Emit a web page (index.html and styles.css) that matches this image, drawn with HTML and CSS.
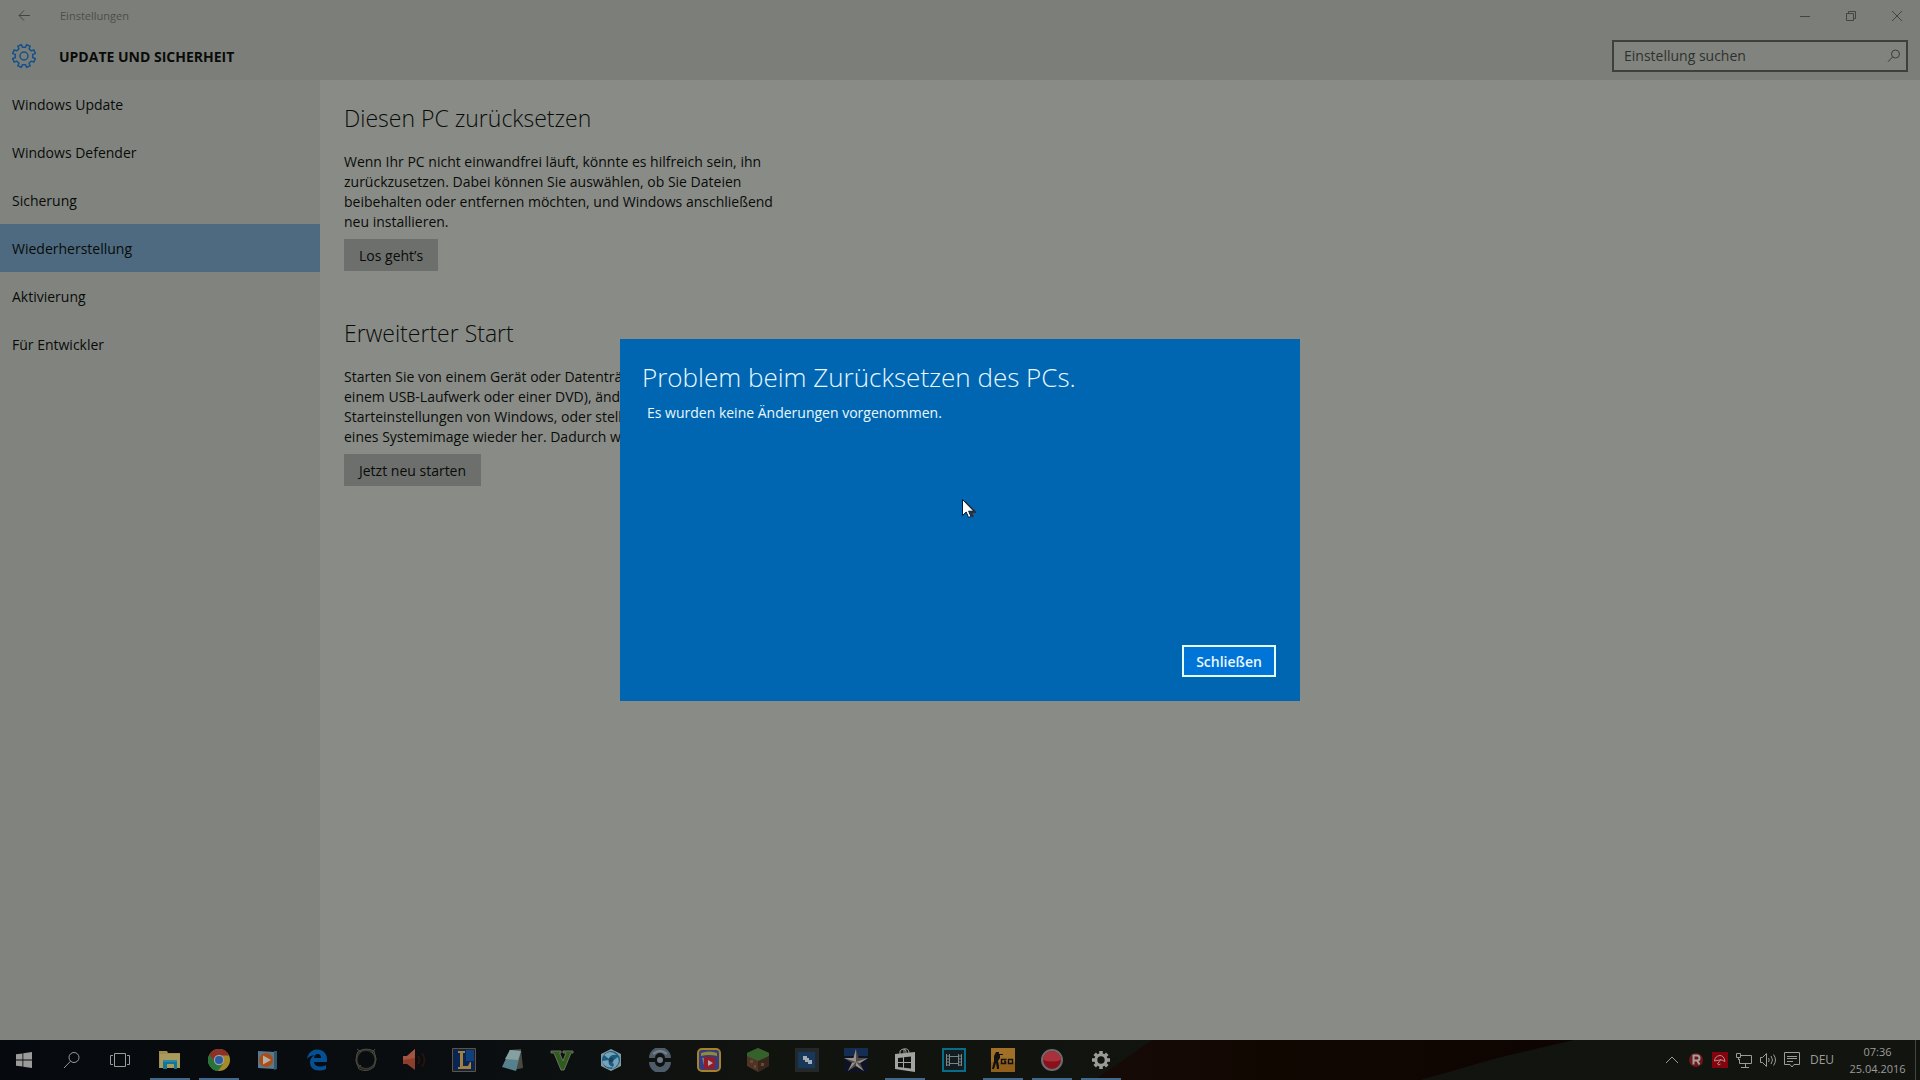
FILE: index.html
```html
<!DOCTYPE html>
<html lang="de">
<head>
<meta charset="utf-8">
<title>Einstellungen</title>
<link rel="stylesheet" href="styles.css">
</head>
<body>
<div class="window">
  <header class="top">
    <div class="titlebar">
      <button class="icon-btn" aria-label="Zurück"><svg width="16" height="16" viewBox="0 0 16 16"><path d="M14 7.500H3M8 2.500l-5 5 5 5"/></svg></button>
      <span class="app-name">Einstellungen</span>
      <button class="icon-btn" aria-label="Minimieren"><svg width="12" height="12" viewBox="0 0 12 12"><path d="M1 6.500h10"/></svg></button>
      <button class="icon-btn" aria-label="Verkleinern"><svg width="12" height="12" viewBox="0 0 12 12"><path d="M1.500 3.500h7v7h-7zM3.500 3.500v-2h7v7h-2"/></svg></button>
      <button class="icon-btn" aria-label="Schließen"><svg width="12" height="12" viewBox="0 0 12 12"><path d="M1 1l10 10M11 1L1 11"/></svg></button>
    </div>
    <div class="heading">
      <svg class="gear" width="26" height="26" viewBox="-13 -13 26 26"><path d="M1.500-8.700L2.600-11.300 6.100-9.800 5.100-7.200Q6.300-6.300 7.200-5.100L9.800-6.100 11.300-2.600 8.700-1.500Q9 0 8.700 1.500L11.300 2.600 9.800 6.100 7.200 5.100Q6.300 6.300 5.100 7.200L6.100 9.800 2.600 11.300 1.500 8.700Q0 9-1.500 8.700L-2.600 11.300-6.100 9.800-5.100 7.200Q-6.300 6.300-7.200 5.100L-9.800 6.100-11.300 2.600-8.700 1.500Q-9 0-8.700-1.500L-11.300-2.600-9.800-6.100-7.200-5.100Q-6.300-6.300-5.100-7.200L-6.100-9.800-2.600-11.300-1.500-8.700Q0-9 1.500-8.700z"/><circle r="4"/></svg>
      <h1>UPDATE UND SICHERHEIT</h1>
      <label class="search">
        <input type="text" placeholder="Einstellung suchen" aria-label="Einstellung suchen">
        <svg width="14" height="14" viewBox="0 0 14 14"><circle cx="8.500" cy="5" r="4"/><path d="M5.700 7.800L1 12.800"/></svg>
      </label>
    </div>
  </header>
  <div class="body">
    <nav class="side">
      <a href="#">Windows Update</a>
      <a href="#">Windows Defender</a>
      <a href="#">Sicherung</a>
      <a href="#" class="current" aria-current="page">Wiederherstellung</a>
      <a href="#">Aktivierung</a>
      <a href="#">Für Entwickler</a>
    </nav>
    <main class="content">
      <section>
        <h2>Diesen PC zurücksetzen</h2>
        <p>Wenn Ihr PC nicht einwandfrei läuft, könnte es hilfreich sein, ihn<br>zurückzusetzen. Dabei können Sie auswählen, ob Sie Dateien<br>beibehalten oder entfernen möchten, und Windows anschließend<br>neu installieren.</p>
        <button class="action">Los geht’s</button>
      </section>
      <section>
        <h2>Erweiterter Start</h2>
        <p class="clipped">Starten Sie von einem Gerät oder Datenträger<br>einem USB-Laufwerk oder einer DVD), ändern<br>Starteinstellungen von Windows, oder stellen<br>eines Systemimage wieder her. Dadurch wird</p>
        <button class="action">Jetzt neu starten</button>
      </section>
    </main>
  </div>
  <div class="overlay">
    <div class="dialog" role="dialog" aria-labelledby="dialog-title">
      <h2 id="dialog-title">Problem beim Zurücksetzen des PCs.</h2>
      <p>Es wurden keine Änderungen vorgenommen.</p>
      <button class="close">Schließen</button>
    </div>
    <svg class="cursor" width="14" height="20" viewBox="0 0 14 20"><path d="M2.500 2.500L13 13H8.800L11 18" stroke="#35302f" stroke-width="2" fill="none"/><path d="M.5.500V16.500L4.200 13 6.600 18.500 9 17.500 6.600 12.200H11.800z" fill="#fff" stroke="#001a3a"/></svg>
  </div>
</div>
<footer class="taskbar">
  <div class="system">
    <button aria-label="Start"><svg width="16" height="16" viewBox="0 0 16 16" fill="#9b9c99"><path d="M0 2.300L6.500 1.400V7.500H0zM7.300 1.300L16 0v7.500H7.300zM0 8.400h6.500v6.200L0 13.700zM7.300 8.400H16V16l-8.700-1.200z"/></svg></button>
    <button aria-label="Suchen"><svg class="line" width="18" height="18" viewBox="0 0 18 18"><circle cx="11" cy="6.500" r="5"/><path d="M7.500 10.200L1 17"/></svg></button>
    <button aria-label="Aktive Anwendungen"><svg class="line" width="20" height="16" viewBox="0 0 20 16"><path d="M4.500 1.500h11v13h-11zM3 3.500H.500v9H3M17 3.500h2.500v9H17"/></svg></button>
  </div>
  <div class="apps">
    <button class="open" aria-label="Explorer"><svg width="24" height="24" viewBox="0 0 24 24"><path d="M1 3h8l1 2h12v15H1z" fill="#a38d4c"/><path d="M2 6h20v14H2z" fill="#a99a5d"/><path d="M5 12h14v9h-3v-5H9v5H5z" fill="#12759a"/><path d="M5 12h14v2H5z" fill="#2b88a4"/></svg></button>
    <button class="open" aria-label="Chrome"><svg width="24" height="24" viewBox="0 0 24 24"><circle cx="12" cy="12" r="11" fill="#a58a28"/><path d="M11 23L2 7l5 1 5 6 4 2z" fill="#27733c"/><path d="M2.500 6.400A11 11 0 0 0 11 23L7 13z" fill="#27733c"/><path d="M2.500 6.400A11 11 0 0 1 22 7.500H12L7 13z" fill="#8c3028"/><circle cx="12" cy="12" r="5.200" fill="#a0a3a0"/><circle cx="12" cy="12" r="4" fill="#2c5ba5"/></svg></button>
    <button aria-label="Media Player"><svg width="24" height="24" viewBox="0 0 24 24"><path d="M2 3l17 1v17L2 20z" fill="#577a90"/><path d="M18 3h3v18l-3 1z" fill="#34566b"/><circle cx="10" cy="12" r="7" fill="#aa4e18"/><path d="M7 7.500l8 4.500-8 4.500z" fill="#b5b1a8"/></svg></button>
    <button aria-label="Edge"><svg width="24" height="24" viewBox="0 0 24 24"><path d="M2 11C3 4 8 1.500 12 1.500c6 0 10 4 10 9.500v3H9c.2 3 3 4.500 6 4.500 2.300 0 4.300-.6 6-1.600V21c-2 1.100-4.500 1.600-7 1.600-5.500 0-9-3.400-9-8 0-3.300 1.600-6 4.500-7.400C6.500 7.500 3.500 8.500 2 11zm7-1h7c0-2.500-1.200-4-3.400-4C10.500 6 9.300 7.800 9 10z" fill="#054f93"/></svg></button>
    <button aria-label="Ring"><svg width="24" height="24" viewBox="0 0 24 24" fill="none" stroke="#34352f"><circle cx="12" cy="11.500" r="9.500" stroke-width="2"/><path d="M4 3.500Q12-1 20 3l2 8-2 8q-7 6-15 2L2 13 3 6zM3 1l4 3M21 1l-3 4M4 20l3-3" stroke="#4d4b42"/></svg></button>
    <button aria-label="Lautsprecher"><svg width="24" height="24" viewBox="0 0 24 24"><path d="M0 8h4l8-7v21l-8-6H0z" fill="#8c3e2b"/><path d="M0 8h4l8-7v9L0 12z" fill="#a15540"/><path d="M15 8q3 4 0 8M19 5q5 7 0 14" stroke="#28120d" stroke-width="2" fill="none"/></svg></button>
    <button aria-label="League of Legends"><svg width="24" height="24" viewBox="0 0 24 24"><path d="M.5.500h23v23H.5z" fill="#092555" stroke="#67532c"/><path d="M14 2h8v11h-8z" fill="#103f7c"/><path d="M6 3h7v2h-2v13h5l2-4h1v7H6v-2h2V5H6z" fill="#a3803c"/></svg></button>
    <button aria-label="Editor"><svg width="24" height="24" viewBox="0 0 24 24"><path d="M8 2l12-1 2 19-10 2z" fill="#4b4a40"/><path d="M9 2l11 1-5 20-14-4z" fill="#55808c"/><path d="M9 2l11 1-3 9-13-1z" fill="#86a0a2"/></svg></button>
    <button aria-label="GTA V"><svg width="24" height="24" viewBox="0 0 24 24"><path d="M1 3h10v2H9.500l3.500 8 3-8h-3V3h10v2h-2l-7 17h-3L4 5H1z" fill="#2f5c1d" stroke="#6b7063"/></svg></button>
    <button aria-label="Sechseck"><svg width="24" height="24" viewBox="0 0 24 24"><path d="M12 1l10 5v12l-10 5-10-5V6z" fill="#8198a2"/><circle cx="12" cy="12" r="9" fill="#195c83"/><path d="M5 7q6-6 13 0-7-1-8 4M19 9q3 8-6 12 4-6-1-7M3 13q3 8 11 6-6-2-4-7" fill="#77a3b5"/><circle cx="12" cy="12" r="2.500" fill="#194361"/></svg></button>
    <button aria-label="Pokéball"><svg width="24" height="24" viewBox="0 0 24 24"><path d="M1 10a11 11 0 0 1 22 0h-6a5 5 0 0 0-10 0zM1 14h6a5 5 0 0 0 10 0h6a11 11 0 0 1-22 0z" fill="#4e5b68"/><path d="M5 6q7-6 14 0" stroke="#77828a" stroke-width="2" fill="none"/><circle cx="12" cy="12" r="3" fill="#6c7883"/></svg></button>
    <button aria-label="Pokémon TCG"><svg width="24" height="24" viewBox="0 0 24 24"><rect x="1" y="1" width="22" height="22" rx="4" fill="#343c82" stroke="#a58226" stroke-width="2"/><path d="M4 5q8-3 16 0v3q-8-2-16 0z" fill="#8f8a39"/><path d="M5 10l9-1 3 11-9 1z" fill="#7d7888"/><path d="M7 9h11v12H7z" fill="#921c28"/><path d="M11 12l5 3-5 3z" fill="#b5aaa8"/></svg></button>
    <button aria-label="Minecraft"><svg width="24" height="24" viewBox="0 0 24 24"><path d="M12 0l11 5v13l-11 6-11-6V5z" fill="#4e3425"/><path d="M12 11l11-6v13l-11 6z" fill="#38261d"/><path d="M12 0l11 5v3l-11 5L1 8V5z" fill="#35622a"/><path d="M4 12h3v3H4zm4 5h2v3H8zm7-2h3v3h-3z" fill="#6a4a35"/></svg></button>
    <button aria-label="Kacheln"><svg width="24" height="24" viewBox="0 0 24 24"><path d="M0 0h24v24H0z" fill="#23292b"/><path d="M3 4h17v16H3z" fill="#17385a"/><path d="M8 8h4v4H8zm2 2h4v4h-4zm3 2h4v4h-4z" fill="#a6adb2"/></svg></button>
    <button aria-label="Stern"><svg width="24" height="24" viewBox="0 0 24 24"><path d="M0 0h24v24H0z" fill="#0d1322"/><path d="M0 0h24v8H0z" fill="#152d52"/><path d="M12 1l2.500 9H24l-8 5 4 8-8-5-8 5 4-8-8-5h9.500z" fill="#4e4a49"/><path d="M12 1v13l-2.500-4zM24 10l-12 4 4 1zM20 23l-8-9v4zM4 23l8-9-4 1zM0 10l12 4-2.500-4z" fill="#9a928c"/></svg></button>
    <button class="open" aria-label="Store"><svg width="24" height="24" viewBox="0 0 24 24"><path d="M2 6l20-2v20L2 21z" fill="#a3a4a1"/><path d="M7 6V3q4-4 6 0v2M11 5V1q5-1 5 4" fill="none" stroke="#a3a4a1"/><path d="M5 10l5-.6V14H5zM11 9.300L18 8.500V14h-7zM5 15h5v4.500L5 19zM11 15h7v5.500l-7-.8z" fill="#11130f"/></svg></button>
    <button aria-label="Movie Maker"><svg width="24" height="24" viewBox="0 0 24 24"><path d="M1 1h22v22H1z" fill="#121c21" stroke="#086d86" stroke-width="2"/><path d="M4.500 6v12M7.500 6v12M16.500 6v12M19.500 6v12M7.500 8.500h9M7.500 15.500h9M4 8h3M4 11h3M4 14h3M4 17h3M17 8h3M17 11h3M17 14h3M17 17h3" stroke="#7b8588" fill="none"/></svg></button>
    <button class="open" aria-label="Counter-Strike"><svg width="24" height="24" viewBox="0 0 24 24"><path d="M0 0h24v24H0z" fill="#a17026"/><path d="M0 14h24v10H0z" fill="#925e1b"/><path d="M5 4h3v2h4v1H9v3l-2 3 1 5v3H6l-1-6-2 6H1l2-8V8z" fill="#111"/><path d="M15.500 11.500h-5v4h4v-2H13M17.500 11.500h4v4h-4z" fill="none" stroke="#111" stroke-width="1.500"/></svg></button>
    <button class="open" aria-label="Aufnahme"><svg width="24" height="24" viewBox="0 0 24 24"><circle cx="12" cy="12" r="10" fill="#8a101b" stroke="#6c6c70" stroke-width="2"/><path d="M3 12a9 9 0 0 1 18 0q-9 3-18 0z" fill="#a9313b"/></svg></button>
    <button class="open" aria-label="Einstellungen"><svg width="20" height="20" viewBox="-10 -10 20 20" fill="none" stroke="#9c9b97"><circle r="5.200" stroke-width="3"/><path d="M0-9v3M0 9V6M-9 0h3M9 0H6M-6.300-6.300l2 2M6.300-6.300l-2 2M-6.300 6.300l2-2M6.300 6.300l-2-2" stroke-width="3.500"/></svg></button>
  </div>
  <div class="tray">
    <button aria-label="Ausgeblendete Symbole"><svg class="line" width="14" height="16" viewBox="0 0 14 16"><path d="M1 11l6-6 6 6"/></svg></button>
    <button aria-label="Recorder"><svg width="16" height="16" viewBox="0 0 16 16"><circle cx="8" cy="8" r="7" fill="#6d171b"/><path d="M5.500 12.500v-9H9a2.500 2.500 0 0 1 0 5H6M9 8.500l2.500 4" fill="none" stroke="#a2a09d" stroke-width="2"/></svg></button>
    <button aria-label="Virenschutz"><svg width="16" height="16" viewBox="0 0 16 16"><path d="M0 0h16v16H0z" fill="#84030d"/><path d="M2.500 9Q3 4 8 3.500q4 0 5 6-3-2-5.500-1.500T2.500 9zM9 7L5.500 12q1.500 2 3 0" fill="none" stroke="#a99291"/></svg></button>
    <button aria-label="Netzwerk"><svg class="line" width="16" height="16" viewBox="0 0 16 16"><path d="M5 3.500h10.500v8H3.500V7M9.500 12v3M5 15.500h8M.5 1.500h4v4h-4zM2.500 6v2"/></svg></button>
    <button aria-label="Lautstärke"><svg class="line" width="16" height="16" viewBox="0 0 16 16"><path d="M.5 5.500h2l4-4v13l-4-4h-2zM8.500 6q1.500 2 0 4M11 4q3 4 0 8M13.500 2.500q4 5.500 0 11"/></svg></button>
    <button aria-label="Info-Center"><svg class="line" width="16" height="16" viewBox="0 0 16 16"><path d="M.5.500h15v12H10l-2 2.500-2-2.500H.5zM3 4.500h10M3 6.500h10M3 9.500h6"/></svg></button>
    <button class="lang">DEU</button>
    <button class="clock"><span>07:36</span><span>25.04.2016</span></button>
    <i class="peek"></i>
  </div>
</footer>
</body>
</html>
```
FILE: styles.css
```css
* {
  box-sizing: border-box;
}

body {
  margin: 0;
  min-height: 100vh;
  display: flex;
  flex-direction: column;
  font: 14px/20px "Open Sans", "Noto Sans", sans-serif;
  color: #090b09;
  background: #898b87;
}

h1, h2, p {
  margin: 0;
  font-weight: 400;
}

button {
  margin: 0;
  padding: 0;
  border: 0;
  background: none;
  font: inherit;
  color: inherit;
}

svg {
  display: block;
}

.window {
  position: relative;
  flex: 1;
  display: flex;
  flex-direction: column;
}

.top {
  height: 80px;
  background: #7c7e7a;
}

.titlebar {
  height: 32px;
  display: flex;
  align-items: center;
  color: #4c4e4b;
  font-size: 11px;
}

.icon-btn {
  width: 46px;
  height: 32px;
  display: grid;
  place-items: center;
  fill: none;
  stroke: #434542;
}

.icon-btn:first-child {
  width: 48px;
}

.app-name {
  flex: 1;
  padding-left: 12px;
}

.heading {
  height: 48px;
  padding: 0 12px 0 11px;
  display: flex;
  align-items: center;
}

.gear {
  fill: none;
  stroke: #16518a;
  stroke-width: 1.5;
}

h1 {
  flex: 1;
  padding: 2px 0 0 22px;
  font-size: 14px;
  font-weight: 700;
}

.search {
  width: 296px;
  height: 32px;
  padding: 0 5px 0 10px;
  display: flex;
  align-items: center;
  border: 2px solid #3e403d;
  background: #81837f;
}

.search input {
  flex: 1;
  min-width: 0;
  padding: 0;
  border: 0;
  outline: 0;
  background: none;
  font: inherit;
}

.search input::placeholder {
  color: #2f312e;
  opacity: 1;
}

.search svg {
  fill: none;
  stroke: #3c3e3b;
}

.body {
  flex: 1;
  display: flex;
}

.side {
  width: 320px;
  background: #81837f;
}

.side a {
  display: block;
  height: 48px;
  padding: 15px 12px 0;
  color: inherit;
  text-decoration: none;
}

.side .current {
  background: #4d6a80;
}

.content {
  flex: 1;
  padding: 22px 24px;
}

.content section {
  margin-bottom: 46px;
}

.content h2 {
  margin-bottom: 18px;
  font-size: 23px;
  line-height: 32px;
  font-weight: 300;
}

.content p {
  margin-bottom: 7px;
}

.clipped {
  width: 300px;
  overflow: hidden;
  white-space: nowrap;
}

.action {
  height: 32px;
  padding: 2px 15px 0;
  background: #6d6f6c;
}

.overlay {
  position: absolute;
  inset: 0;
  display: grid;
  place-items: center;
}

.dialog {
  width: 680px;
  height: 362px;
  padding: 20px 24px 24px;
  display: flex;
  flex-direction: column;
  background: #0066b1;
  color: #e8f8ff;
}

.dialog h2 {
  margin-left: -2px;
  font-size: 26px;
  line-height: 36px;
  font-weight: 300;
}

.dialog p {
  flex: 1;
  padding: 8px 3px;
}

.close {
  align-self: flex-end;
  width: 94px;
  height: 32px;
  padding-top: 2px;
  border: 2px solid #e4ffff;
  background: #0074d7;
  font-weight: 600;
}

.cursor {
  position: absolute;
  left: 962px;
  top: 499px;
}

.taskbar {
  position: relative;
  z-index: 0;
  height: 40px;
  display: flex;
  background: linear-gradient(90deg, #06090d, #0a0e10 25%, #11130f 40%, #12140f);
  color: #9b9c99;
}

.taskbar::before {
  content: "";
  position: absolute;
  inset: 0;
  z-index: -1;
  background: linear-gradient(90deg, #160a06 58%, #110701 66%, #0e0502 80%);
  clip-path: polygon(57% 100%, 60% 0, 82% 0, 78% 45%, 74% 100%);
}

.system, .apps, .tray {
  display: flex;
}

.system button {
  width: 48px;
  display: grid;
  place-items: center;
}

.apps {
  flex: 1;
  gap: 9px;
  padding-left: 6px;
}

.apps button {
  width: 40px;
  display: grid;
  place-items: center;
}

.apps .open {
  box-shadow: inset 0 -2px #42698c;
}

.line {
  fill: none;
  stroke: #9b9c99;
}

.tray {
  align-items: center;
  font-size: 12px;
}

.tray button {
  width: 24px;
  display: grid;
  place-items: center;
}

.tray .lang {
  width: 36px;
}

.tray .clock {
  width: 75px;
  font-size: 11px;
  line-height: 17px;
}

.peek {
  width: 5px;
  height: 40px;
  border-left: 1px solid #444541;
}
```
